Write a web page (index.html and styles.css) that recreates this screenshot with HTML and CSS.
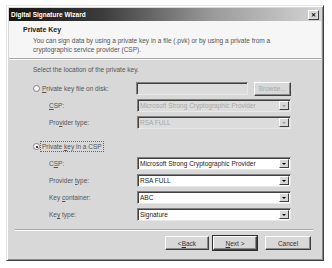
FILE: index.html
```html
<!DOCTYPE html>
<html lang="en">
<head>
    <meta charset="UTF-8">
    <title>Digital Signature Wizard</title>
    <link rel="stylesheet" href="styles.css">
</head>
<body>
    <div class="window">
        <div class="titlebar">
            <span>Digital Signature Wizard</span>
            <span class="close">&#x2715;</span>
        </div>

        <div class="header">
            <h1>Private Key</h1>
            <p>You can sign data by using a private key in a file (.pvk) or by using a private from a cryptographic service provider (CSP).</p>
        </div>

        <div class="content">
            <p class="intro">Select the location of the private key.</p>

            <div class="row">
                <label class="radio"><span class="dot"></span><u>P</u>rivate key file on disk:</label>
                <span class="field short disabled"></span>
                <span class="button small disabled">Browse...</span>
            </div>
            <div class="row sub">
                <label><u>C</u>SP:</label>
                <span class="field select disabled">Microsoft Strong Cryptographic Provider<i class="arrow"></i></span>
            </div>
            <div class="row sub">
                <label>Pro<u>v</u>ider type:</label>
                <span class="field select disabled">RSA FULL<i class="arrow"></i></span>
            </div>

            <div class="row group">
                <label class="radio"><span class="dot checked"></span><span class="focus">Private <u>k</u>ey in a CSP</span></label>
            </div>
            <div class="row sub">
                <label>C<u>S</u>P:</label>
                <span class="field select">Microsoft Strong Cryptographic Provider<i class="arrow"></i></span>
            </div>
            <div class="row sub">
                <label>Provider <u>t</u>ype:</label>
                <span class="field select">RSA FULL<i class="arrow"></i></span>
            </div>
            <div class="row sub">
                <label>Key <u>c</u>ontainer:</label>
                <span class="field select">ABC<i class="arrow"></i></span>
            </div>
            <div class="row sub">
                <label>Ke<u>y</u> type:</label>
                <span class="field select">Signature<i class="arrow"></i></span>
            </div>
        </div>

        <div class="footer">
            <span class="button">&lt; <u>B</u>ack</span>
            <span class="button default"><u>N</u>ext &gt;</span>
            <span class="button cancel">Cancel</span>
        </div>
    </div>
</body>
</html>
```

FILE: styles.css
```css
* {
    margin: 0;
    padding: 0;
    box-sizing: border-box;
}

body {
    font-family: "Liberation Sans", Arial, sans-serif;
    font-size: 6.5px;
    background: #ffffff;
    color: #444;
}

u {
    text-decoration: underline;
}

.window {
    margin: 5px 0 0 6px;
    width: 318px;
    height: 256px;
    background: #d8d8d8;
    border: 1px solid #e6e6e6;
    border-right-color: #404040;
    border-bottom-color: #404040;
    box-shadow: inset 1px 1px 0 #fff, inset -1px -1px 0 #8a8a8a;
    padding: 2px;
    display: flex;
    flex-direction: column;
}

.titlebar {
    height: 13px;
    background: linear-gradient(90deg, #141414, #3c3c3c 30%, #9a9a9a 65%, #d4d4d4);
    color: #fff;
    font-weight: bold;
    display: flex;
    align-items: center;
    justify-content: space-between;
    padding: 0 2px 0 2px;
}

.close {
    width: 11px;
    height: 10px;
    background: #d8d8d8;
    border: 1px solid #fff;
    border-right-color: #404040;
    border-bottom-color: #404040;
    color: #000;
    font-size: 6px;
    display: flex;
    align-items: center;
    justify-content: center;
}

.header {
    background: #f6f6f6;
    height: 38px;
    padding: 5px 0 0 14px;
    border-bottom: 1px solid #a8a8a8;
    box-shadow: 0 1px 0 #fff;
}

.header h1 {
    font-size: 7px;
    font-weight: bold;
    color: #222;
    margin-bottom: 3px;
}

.header p {
    padding: 0 24px 0 10px;
    line-height: 9px;
    color: #555;
}

.content {
    padding: 7px 30px 0 24px;
    flex: 1;
}

.intro {
    color: #555;
    margin-bottom: 7px;
}

.row {
    display: flex;
    align-items: center;
    height: 17px;
}

.row label {
    width: 104px;
    color: #555;
}

.row.sub label {
    padding-left: 16px;
}

.row.group {
    margin-top: 7px;
}

.radio {
    display: flex;
    align-items: center;
    white-space: nowrap;
}

.dot {
    width: 7px;
    height: 7px;
    border-radius: 50%;
    background: #fff;
    border: 1px solid #808080;
    margin-right: 2px;
    position: relative;
}

.dot.checked::after {
    content: "";
    position: absolute;
    left: 1.5px;
    top: 1.5px;
    width: 2px;
    height: 2px;
    border-radius: 50%;
    background: #000;
}

.focus {
    outline: 1px dotted #666;
    outline-offset: 1px;
}

.field {
    height: 13px;
    background: #fff;
    border: 1px solid #808080;
    border-right-color: #e8e8e8;
    border-bottom-color: #e8e8e8;
    box-shadow: inset 1px 1px 0 #404040;
    display: flex;
    align-items: center;
    padding-left: 2px;
    color: #222;
    flex: 1;
    position: relative;
}

.field.short {
    flex: 0 0 112px;
}

.field.disabled {
    background: #dcdcdc;
    color: #a8a8a8;
}

.arrow {
    position: absolute;
    right: 1px;
    top: 1px;
    width: 10px;
    height: 9px;
    background: #d8d8d8;
    border: 1px solid #fff;
    border-right-color: #404040;
    border-bottom-color: #404040;
}

.arrow::after {
    content: "";
    position: absolute;
    left: 2px;
    top: 2.5px;
    border-left: 2.5px solid transparent;
    border-right: 2.5px solid transparent;
    border-top: 2.5px solid #000;
}

.field.disabled .arrow::after {
    border-top-color: #9a9a9a;
}

.button {
    width: 44px;
    height: 14px;
    background: #d8d8d8;
    border: 1px solid #fff;
    border-right-color: #404040;
    border-bottom-color: #404040;
    box-shadow: inset -1px -1px 0 #8a8a8a;
    display: flex;
    align-items: center;
    justify-content: center;
    color: #333;
}

.button.small {
    width: 38px;
    margin-left: 6px;
}

.button.disabled {
    color: #a8a8a8;
}

.button.default {
    outline: 1px solid #303030;
    margin-left: 4px;
}

.button.cancel {
    width: 46px;
    margin-left: 8px;
}

.footer {
    margin: 0 8px 0 6px;
    border-top: 1px solid #a8a8a8;
    box-shadow: inset 0 1px 0 #fff;
    height: 29px;
    display: flex;
    align-items: center;
    justify-content: flex-end;
    padding: 0 2px 2px 0;
}
```
